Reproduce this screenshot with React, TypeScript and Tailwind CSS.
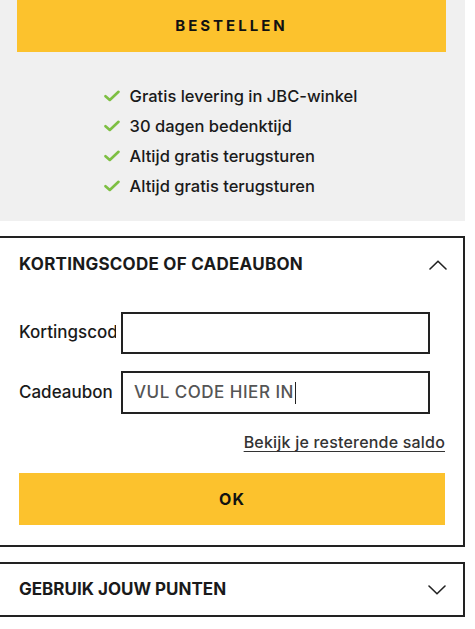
import { ReactNode } from 'react';

const perks = [
  'Gratis levering in JBC-winkel',
  '30 dagen bedenktijd',
  'Altijd gratis terugsturen',
  'Altijd gratis terugsturen',
];

function Check() {
  return (
    <svg width="16" height="12" viewBox="0 0 16 12" fill="none" className="shrink-0">
      <path d="M1.5 6.2 L5.8 10 L14.5 1.8" stroke="#7dbf43" strokeWidth="2.6" strokeLinecap="round" strokeLinejoin="round" />
    </svg>
  );
}

function Chevron({ up }: { up?: boolean }) {
  return (
    <svg width="18" height="10" viewBox="0 0 18 10" fill="none">
      <path
        d={up ? 'M1 9 L9 1.2 L17 9' : 'M1 1 L9 8.8 L17 1'}
        stroke="#222"
        strokeWidth="1.6"
        strokeLinecap="round"
        strokeLinejoin="round"
      />
    </svg>
  );
}

// label is allowed to run under the input, the input (white, on top) hides the overflow
function Field({ label, children }: { label: string; children: ReactNode }) {
  return (
    <div className="flex items-center">
      <span className="w-[97px] shrink-0 whitespace-nowrap text-[17px] font-medium text-[#1a1a1a]">{label}</span>
      <div className="relative z-10 bg-white pl-[5px]">{children}</div>
    </div>
  );
}

export default function App() {
  return (
    <div className="min-h-[629px] w-[475px] bg-white font-['Inter',sans-serif] text-[#1a1a1a]">
      <div className="h-[221px] w-[465px] bg-[#f0f0f0] px-[17px]">
        <button className="flex h-[52px] w-[429px] items-center justify-center bg-[#fcc22d] text-[15px] font-bold tracking-[3px] text-[#111]">
          BESTELLEN
        </button>
        <div className="mt-[29px] flex justify-center">
          <ul className="mr-[4px]">
            {perks.map((p, i) => (
              <li key={i} className="flex h-[30px] items-center gap-[10px] text-[16.5px] font-medium">
                <Check />
                {p}
              </li>
            ))}
          </ul>
        </div>
      </div>

      <section className="mt-[15px] w-[465px] border-2 border-l-0 border-[#222] pb-[20px] pl-[19px] pr-[18px]">
        <div className="mr-[-2px] flex h-[54px] items-center justify-between">
          <h2 className="text-[17px] font-bold tracking-[0.25px]">KORTINGSCODE OF CADEAUBON</h2>
          <Chevron up />
        </div>
        <div className="mt-[20px] flex flex-col gap-[17px]">
          <Field label="Kortingscode">
            <input className="block h-[42px] w-[309px] border-2 border-[#222] bg-white px-3 outline-none" />
          </Field>
          <Field label="Cadeaubon">
            <div className="flex h-[43px] w-[309px] items-center border-2 border-[#222] bg-white pl-[11px] text-[17px] font-medium tracking-[0.5px] text-[#555]">
              VUL CODE HIER IN
              <span className="ml-[1px] h-[22px] w-[1.5px] bg-[#222]" />
            </div>
          </Field>
        </div>
        <div className="mt-[18px] flex justify-end">
          <a className="text-[16px] font-medium leading-[20px] tracking-[0.2px] text-[#333] underline underline-offset-[3px]">
            Bekijk je resterende saldo
          </a>
        </div>
        <button className="mt-[21px] flex h-[52px] w-[426px] items-center justify-center bg-[#fcc22d] text-[16px] font-bold tracking-[1px] text-[#111]">
          OK
        </button>
      </section>

      <section className="mt-[15px] flex h-[55px] w-[465px] items-center justify-between border-2 border-l-0 border-[#222] pl-[19px] pr-[17px]">
        <h2 className="text-[17px] font-bold">GEBRUIK JOUW PUNTEN</h2>
        <Chevron />
      </section>
    </div>
  );
}
